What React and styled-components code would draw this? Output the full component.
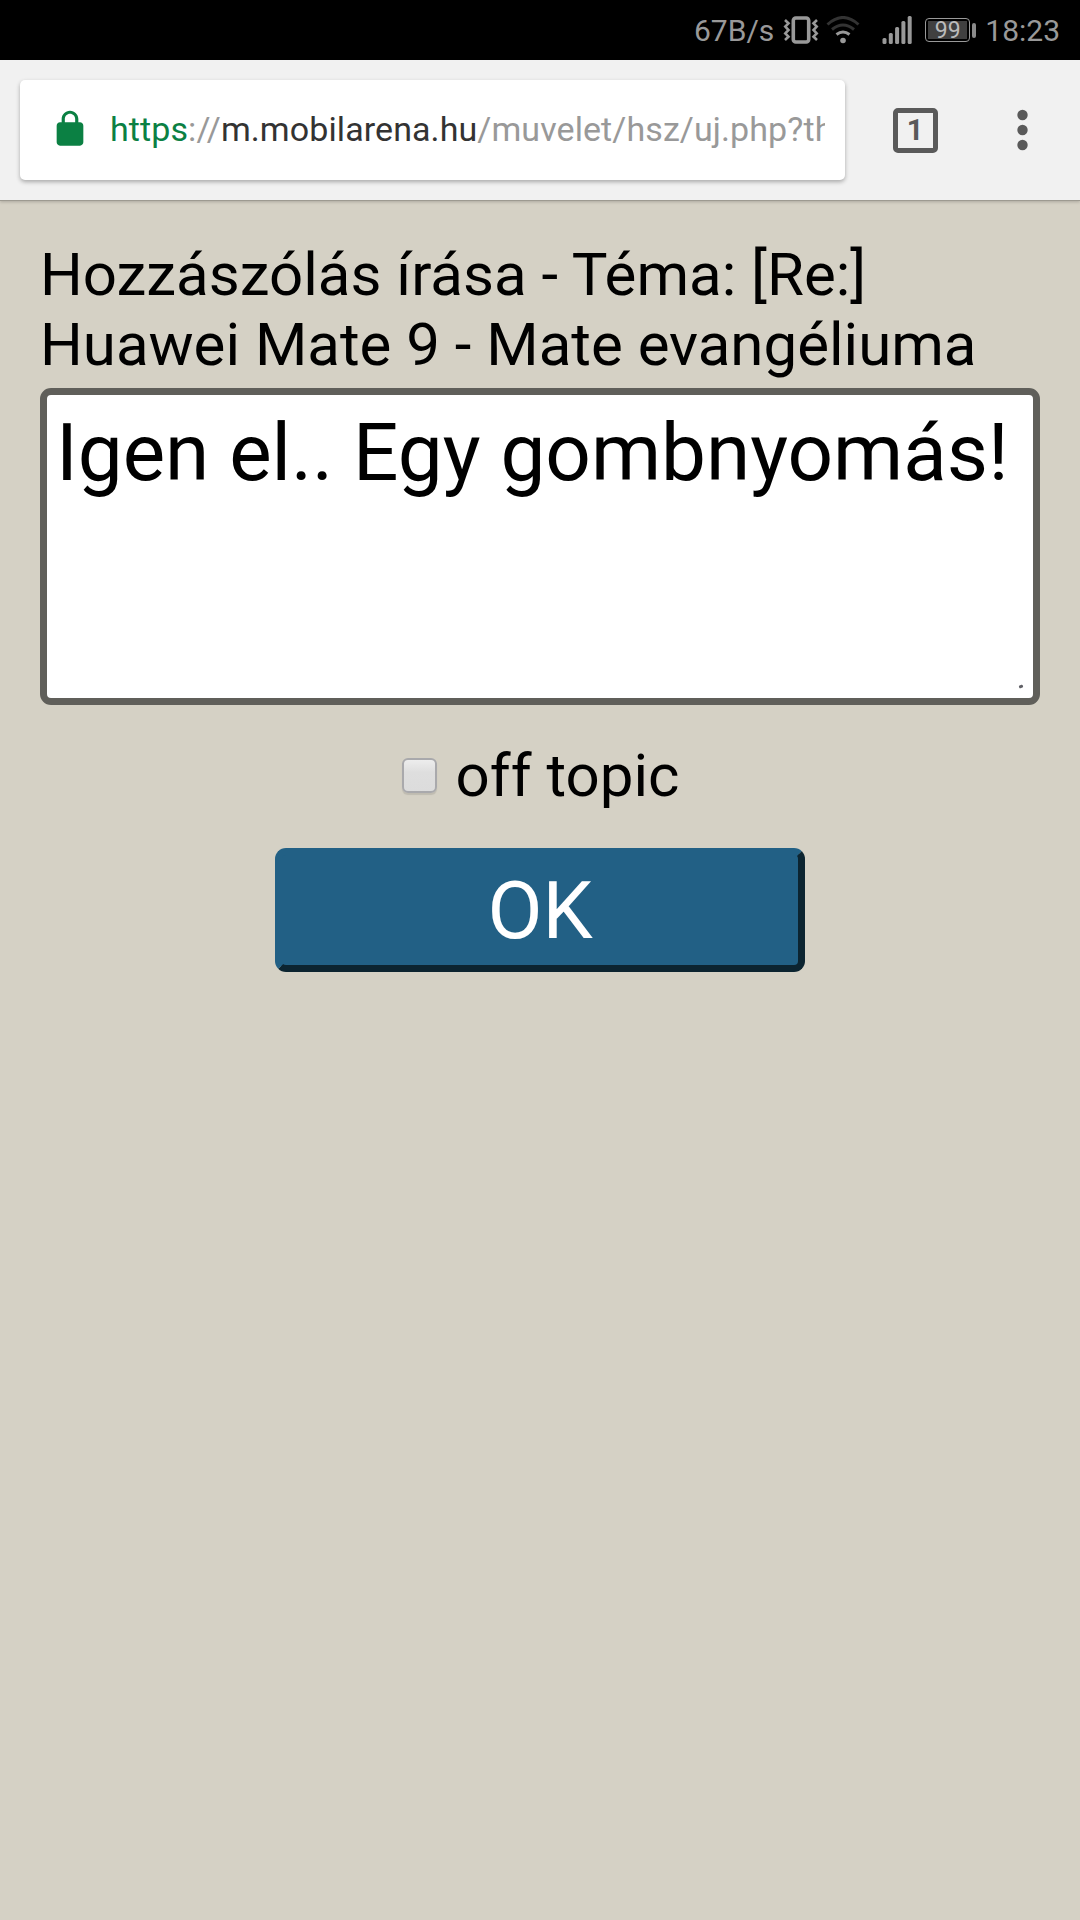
import React, { useState } from "react";
import styled, { createGlobalStyle } from "styled-components";

const GlobalStyle = createGlobalStyle`
  * {
    box-sizing: border-box;
  }
  body {
    margin: 0;
    background: #d5d1c5;
    font-family: Roboto, sans-serif;
  }
`;

const Screen = styled.div`
  display: flex;
  flex-direction: column;
  width: 1080px;
  height: 1920px;
  overflow: hidden;
  background: #d5d1c5;
`;

const StatusBar = styled.div`
  display: flex;
  align-items: center;
  justify-content: flex-end;
  height: 60px;
  padding-right: 20px;
  background: #000;
  color: #999;
  font-size: 30px;
  line-height: 60px;
`;

const Speed = styled.span`
  padding-top: 1px;
`;

const StatusIcon = styled.svg`
  flex: none;
  margin-left: ${props => props.$gap}px;
`;

const Battery = styled.div`
  width: 45px;
  height: 24px;
  margin-left: 13px;
  padding: 2px;
  border: 1px solid #999;
  border-radius: 4px;
`;

const BatteryLevel = styled.div`
  height: 18px;
  background: #404040;
  color: #bbb;
  font-size: 23px;
  line-height: 19px;
  text-align: center;
`;

const BatteryTip = styled.div`
  width: 4px;
  height: 15px;
  margin-left: 2px;
  border-radius: 2px;
  background: #8a8a8a;
`;

const Clock = styled.span`
  margin-left: 9px;
  padding-top: 1px;
`;

const Toolbar = styled.div`
  z-index: 1;
  display: flex;
  align-items: center;
  flex: none;
  height: 140px;
  padding: 0 52px 0 20px;
  background: #f1f1f1;
  box-shadow: 0 1px 0 #9d9a91, 0 2px 3px rgba(0, 0, 0, 0.2);
`;

const AddressBar = styled.div`
  display: flex;
  align-items: center;
  width: 825px;
  height: 100px;
  padding: 0 20px 2px 30px;
  border-radius: 5px;
  background: #fff;
  box-shadow: 0 2px 4px rgba(0, 0, 0, 0.3);
`;

const Url = styled.div`
  flex: 1;
  margin-left: 20px;
  overflow: hidden;
  white-space: nowrap;
  color: #999;
  font-size: 34px;
  line-height: 44px;
  letter-spacing: 0.09px;
`;

const Scheme = styled.span`
  color: #0b8043;
`;

const Domain = styled.span`
  color: #333;
`;

const TabCount = styled.button`
  width: 45px;
  height: 45px;
  margin-left: 47.5px;
  padding: 0;
  border: 5px solid #5a5a5a;
  border-radius: 5px;
  background: none;
  color: #5a5a5a;
  font: bold 29px/35px Roboto, sans-serif;
`;

const MenuButton = styled.svg`
  margin-left: auto;
`;

const Form = styled.form`
  display: flex;
  flex-direction: column;
  align-items: center;
  padding: 40px 40px 0;
`;

const Title = styled.h1`
  align-self: stretch;
  margin: 0;
  font-size: 60px;
  font-weight: 400;
  line-height: 70px;
`;

const MessageBox = styled.div`
  position: relative;
  display: flex;
  width: 1000px;
  height: 317px;
  margin-top: 8px;
`;

const Message = styled.textarea`
  width: 100%;
  padding: 11px 9px;
  border: 7px solid #605f5a;
  border-radius: 11px;
  outline: none;
  resize: none;
  overflow: hidden;
  background: #fff;
  color: #000;
  font: 400 80px/94px Roboto, sans-serif;
`;

const Grip = styled.span`
  position: absolute;
  right: 17px;
  bottom: 17px;
  width: 4px;
  height: 3px;
  border-radius: 1px;
  background: #606066;
  transform: rotate(-20deg);
`;

const OffTopic = styled.label`
  display: flex;
  align-items: center;
  margin-top: 36px;
  padding-left: 1px;
  font-size: 60px;
  line-height: 70px;
`;

const Checkbox = styled.input`
  appearance: none;
  width: 35px;
  height: 35px;
  margin: 0 19px 2px 0;
  border: 2px solid #a9a9ac;
  border-radius: 6px;
  background: linear-gradient(#ededed, #dedede 40%, #dcdcdc);
  box-shadow: 0 2px 1px rgba(0, 0, 0, 0.1);
`;

const SubmitButton = styled.button`
  width: 530px;
  height: 124px;
  margin-top: 37px;
  padding: 2px 0 0;
  border: 7px solid;
  border-color: #226085 #0c2430 #0c2430 #226085;
  border-radius: 11px;
  background: #226085;
  color: #fff;
  font: 400 80px/108px Roboto, sans-serif;
`;

const SIGNAL_BARS = [6, 11, 17, 23, 28];

function StatusIcons() {
  return (
    <>
      <StatusIcon $gap={9} width="36" height="28" viewBox="0 0 36 28" fill="none" stroke="#999">
        <rect x="10.3" y="2" width="15.4" height="24" rx="2.5" strokeWidth="3.6" />
        <path
          d="M2 4l3.5 3.3-3.2 3.3 3.2 3.4-3.2 3.4 3.2 3.3L2 24M34 4l-3.5 3.3 3.2 3.3-3.2 3.4 3.2 3.4-3.2 3.3L34 24"
          strokeWidth="2.6"
        />
      </StatusIcon>
      <StatusIcon $gap={7} width="34" height="28" viewBox="0 0 34 28" fill="none" strokeWidth="3">
        <path d="M1.5 8.5Q17-5.5 32.5 8.5" stroke="#333" />
        <path d="M6 13.5Q17 4.5 28 13.5" stroke="#333" />
        <path d="M10.5 18.5Q17 13.5 23.5 18.5" stroke="#999" />
        <circle cx="17" cy="24.5" r="2.8" fill="#999" />
      </StatusIcon>
      <StatusIcon $gap={22} width="30" height="28" viewBox="0 0 30 28" fill="#999">
        {SIGNAL_BARS.map((h, i) => (
          <rect key={h} x={i * 6.3 + 0.5} y={28 - h} width="4" height={h} rx="1.5" />
        ))}
      </StatusIcon>
    </>
  );
}

function App() {
  const [message, setMessage] = useState("Igen el.. Egy gombnyomás!");
  const handleSubmit = e => {
    e.preventDefault();
  };
  return (
    <Screen>
      <GlobalStyle />
      <StatusBar>
        <Speed>67B/s</Speed>
        <StatusIcons />
        <Battery>
          <BatteryLevel>99</BatteryLevel>
        </Battery>
        <BatteryTip />
        <Clock>18:23</Clock>
      </StatusBar>
      <Toolbar>
        <AddressBar>
          <svg width="40" height="40" viewBox="0 0 24 24" fill="#0b8043">
            <path d="M18 8h-1V6c0-2.760-2.240-5-5-5S7 3.240 7 6v2H6c-1.100 0-2 .9-2 2v10c0 1.100.9 2 2 2h12c1.100 0 2-.9 2-2V10c0-1.100-.9-2-2-2zM8.900 8V6c0-1.710 1.390-3.100 3.100-3.100s3.100 1.390 3.100 3.100v2z" />
          </svg>
          <Url>
            <Scheme>https</Scheme>://<Domain>m.mobilarena.hu</Domain>/muvelet/hsz/uj.php?th
          </Url>
        </AddressBar>
        <TabCount>1</TabCount>
        <MenuButton width="11" height="42" viewBox="0 0 11 42" fill="#5a5a5a">
          <circle cx="5.5" cy="6" r="5.2" />
          <circle cx="5.5" cy="21" r="5.2" />
          <circle cx="5.5" cy="36" r="5.2" />
        </MenuButton>
      </Toolbar>
      <Form onSubmit={handleSubmit}>
        <Title>
          Hozzászólás írása - Téma: [Re:] Huawei Mate 9 - Mate evangéliuma
        </Title>
        <MessageBox>
          <Message
            value={message}
            spellCheck={false}
            onChange={e => setMessage(e.target.value)}
          />
          <Grip />
        </MessageBox>
        <OffTopic>
          <Checkbox type="checkbox" />
          off topic
        </OffTopic>
        <SubmitButton type="submit">OK</SubmitButton>
      </Form>
    </Screen>
  );
}

export default App;
